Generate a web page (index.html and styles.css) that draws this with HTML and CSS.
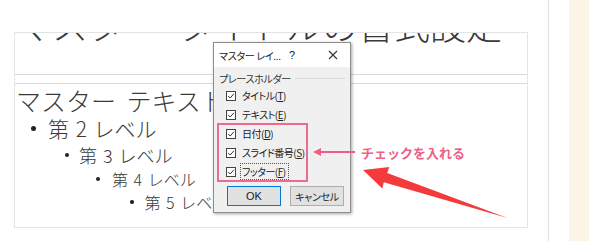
FILE: index.html
```html
<!DOCTYPE html>
<html lang="ja">
<head>
<meta charset="utf-8">
<title>スライドマスター</title>
<link rel="stylesheet" href="styles.css">
</head>
<body>
<div class="page">
  <main class="main">
    <figure class="shot">
      <div class="slide">
        <div class="title-ph"><p class="title">マスター タイトルの書式設定</p></div>
        <div class="body-ph">
          <p class="l1">マスター テキスト</p>
          <ul class="levels">
            <li class="lv lv2"><span class="dot"></span><span>第 2 レベル</span></li>
            <li class="lv lv3"><span class="dot"></span><span>第 3 レベル</span></li>
            <li class="lv lv4"><span class="dot"></span><span>第 4 レベル</span></li>
            <li class="lv lv5"><span class="dot"></span><span>第 5 レベル</span></li>
          </ul>
        </div>

        <div class="dialog">
          <div class="dlg-bar">
            <span class="dlg-title">マスター レイ...</span>
            <span class="dlg-help">?</span>
            <svg class="dlg-close" width="10" height="10" viewBox="0 0 10 10"><path d="M1 1 L9 9 M9 1 L1 9" stroke="#333" stroke-width="1.1" fill="none"/></svg>
          </div>
          <div class="dlg-body">
            <div class="grp"><span>プレースホルダー</span><span class="grp-line"></span></div>
            <div class="row"><svg class="cb" width="10" height="10" viewBox="0 0 10 10"><rect x="0.5" y="0.5" width="9" height="9" fill="#fff" stroke="#444"/><path d="M2.2 5 L4.2 7 L7.9 2.8" stroke="#333" stroke-width="1" fill="none"/></svg><span>タイトル(<u>T</u>)</span></div>
            <div class="row"><svg class="cb" width="10" height="10" viewBox="0 0 10 10"><rect x="0.5" y="0.5" width="9" height="9" fill="#fff" stroke="#444"/><path d="M2.2 5 L4.2 7 L7.9 2.8" stroke="#333" stroke-width="1" fill="none"/></svg><span>テキスト(<u>E</u>)</span></div>
            <div class="row"><svg class="cb" width="10" height="10" viewBox="0 0 10 10"><rect x="0.5" y="0.5" width="9" height="9" fill="#fff" stroke="#444"/><path d="M2.2 5 L4.2 7 L7.9 2.8" stroke="#333" stroke-width="1" fill="none"/></svg><span>日付(<u>D</u>)</span></div>
            <div class="row"><svg class="cb" width="10" height="10" viewBox="0 0 10 10"><rect x="0.5" y="0.5" width="9" height="9" fill="#fff" stroke="#444"/><path d="M2.2 5 L4.2 7 L7.9 2.8" stroke="#333" stroke-width="1" fill="none"/></svg><span>スライド番号(<u>S</u>)</span></div>
            <div class="row"><svg class="cb" width="10" height="10" viewBox="0 0 10 10"><rect x="0.5" y="0.5" width="9" height="9" fill="#fff" stroke="#444"/><path d="M2.2 5 L4.2 7 L7.9 2.8" stroke="#333" stroke-width="1" fill="none"/></svg><span class="focus">フッター(<u>F</u>)</span></div>
            <div class="btns">
              <span class="btn btn-ok">OK</span>
              <span class="btn">キャンセル</span>
            </div>
          </div>
        </div>

        <div class="highlight"></div>

        <div class="note">
          <svg width="42" height="10" viewBox="0 0 42 10"><path d="M0 5 L8 1 L8 4 L42 4 L42 6 L8 6 L8 9 Z" fill="#ee5f88"/></svg>
          <span>チェックを入れる</span>
        </div>

        <svg class="big-arrow" width="512" height="194" viewBox="0 0 512 194">
          <polygon points="348,137 374.3,134 372.2,140 492.5,185 368.8,149.3 367.3,155.5" fill="#f43b3b"/>
        </svg>
      </div>
    </figure>
  </main>
  <aside class="side"></aside>
</div>
</body>
</html>
```

FILE: styles.css
```css
html, body {
  margin: 0;
  padding: 0;
  background: #fff;
}

.page {
  display: flex;
  height: 241px;
  overflow: hidden;
}

.main {
  flex: none;
  width: 549px;
  box-sizing: border-box;
  border-right: 1px solid #e0e0e0;
  padding: 32px 0 0 14px;
}

.side {
  flex: 1;
  margin-left: 20px;
  background: #fdf4e8;
}

.shot {
  margin: 0;
}

.slide {
  position: relative;
  width: 514px;
  height: 196px;
  box-sizing: border-box;
  border: 1px solid #e4e4e4;
  overflow: hidden;
  background: #fff;
  font-family: "Noto Sans CJK JP", sans-serif;
  font-weight: 300;
  color: #3a3a3a;
}

.title-ph {
  height: 41px;
  border-bottom: 1px solid #d9d9d9;
  overflow: hidden;
}

.title {
  margin: -27px 0 0 1px;
  font-size: 36px;
  line-height: 36px;
  white-space: nowrap;
  word-spacing: 10px;
}

.body-ph {
  margin-top: 8px;
  border-top: 1px solid #d9d9d9;
  padding-top: 2px;
}

.l1 {
  margin: 0 0 0 1px;
  font-size: 25px;
  line-height: 28px;
  word-spacing: 5px;
  white-space: nowrap;
}

.levels {
  list-style: none;
  margin: 0;
  padding: 0;
}

.lv {
  display: flex;
  align-items: center;
  white-space: nowrap;
  word-spacing: 2px;
}

.dot {
  flex: none;
  border-radius: 50%;
  background: #222;
}

.lv2 { font-size: 21px; height: 28px; padding-left: 16px; }
.lv2 .dot { width: 5px; height: 5px; margin-right: 12px; }

.lv3 { font-size: 18px; height: 26px; padding-left: 50px; }
.lv3 .dot { width: 4px; height: 4px; margin-right: 10px; }

.lv4 { font-size: 16px; height: 22px; padding-left: 81px; }
.lv4 .dot { width: 4px; height: 4px; margin-right: 12px; }

.lv5 { font-size: 16px; height: 24px; padding-left: 115px; }
.lv5 .dot { width: 3.5px; height: 3.5px; margin-right: 11px; }

/* dialog */
.dialog {
  position: absolute;
  left: 198px;
  top: 9px;
  width: 138px;
  height: 171px;
  box-sizing: border-box;
  border: 1px solid #8e8e8e;
  background: #f0f0f0;
  box-shadow: 1px 1px 3px rgba(0, 0, 0, 0.35);
  display: flex;
  flex-direction: column;
  font-family: "Noto Sans CJK JP", sans-serif;
  font-weight: 400;
  font-feature-settings: "palt";
  color: #222;
  font-size: 10px;
}

.dlg-bar {
  height: 24px;
  flex: none;
  background: #fff;
  display: flex;
  align-items: center;
  padding-left: 5px;
}

.dlg-title {
  font-size: 10px;
  letter-spacing: -0.3px;
}

.dlg-help {
  margin-left: auto;
  font-size: 11px;
  font-family: "Liberation Sans", sans-serif;
}

.dlg-close {
  margin: 0 12px 0 33px;
}

.dlg-body {
  flex: 1;
  padding: 4px 0 0 5px;
  display: flex;
  flex-direction: column;
}

.grp {
  display: flex;
  align-items: center;
  height: 14px;
  color: #333;
  letter-spacing: -0.3px;
}

.grp-line {
  flex: 1;
  height: 1px;
  background: #dadada;
  margin: 0 5px 0 4px;
}

.row {
  display: flex;
  align-items: center;
  height: 19px;
  padding-left: 7px;
  letter-spacing: -0.5px;
}

.grp + .row {
  margin-top: 1px;
}

.cb {
  flex: none;
  margin-right: 6px;
}

.row u {
  text-decoration-thickness: 1px;
  text-underline-offset: 1px;
}

.focus {
  border: 1px dotted #555;
  padding: 0 2px 0 1px;
  margin-left: -2px;
}

.btns {
  display: flex;
  gap: 9px;
  margin: 5px 0 0 8px;
}

.btn {
  width: 54px;
  height: 20px;
  box-sizing: border-box;
  border: 1px solid #adadad;
  background: #e1e1e1;
  display: flex;
  align-items: center;
  justify-content: center;
  font-size: 10px;
  letter-spacing: -0.3px;
}

.btn-ok {
  border-color: #0078d7;
  font-family: "Liberation Sans", sans-serif;
  font-size: 11px;
  letter-spacing: 0;
}

/* annotations */
.highlight {
  position: absolute;
  left: 202px;
  top: 90px;
  width: 91px;
  height: 59px;
  box-sizing: border-box;
  border: 2px solid #ee6b8d;
}

.note {
  position: absolute;
  left: 298px;
  top: 110px;
  height: 18px;
  display: flex;
  align-items: center;
  gap: 6px;
  color: #ee6189;
  font-family: "Noto Sans CJK JP", sans-serif;
  font-weight: 700;
  font-size: 13px;
  white-space: nowrap;
}

.note svg {
  flex: none;
}

.big-arrow {
  position: absolute;
  left: 0;
  top: 0;
}
```
